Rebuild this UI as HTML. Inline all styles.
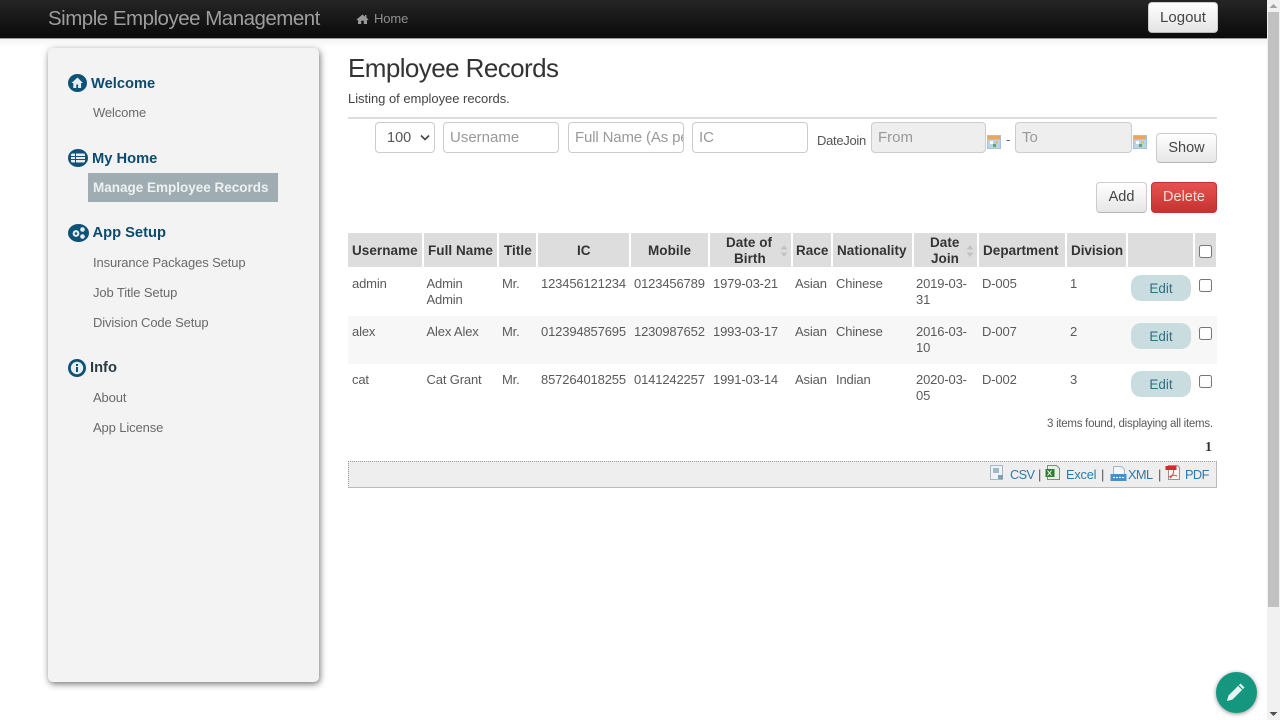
<!DOCTYPE html>
<html><head><meta charset="utf-8"><title>Employee Records</title>
<style>
html,body{margin:0;padding:0;width:1280px;height:720px;overflow:hidden;background:#fff}
body{position:relative;font-family:"Liberation Sans",sans-serif;font-size:13px;color:#555}
.a,.t,.h,.m{position:absolute}
.t,.h,.m{white-space:nowrap;line-height:16px}
.t{color:#5a5a5a;letter-spacing:-.15px}
.h{font-weight:bold;color:#333;text-align:center;font-size:13.5px;letter-spacing:.05px}
.m{color:#6a6a6a;font-size:13px;letter-spacing:-.12px}
.s{color:#0d4a6e;font-weight:bold;font-size:14.7px;line-height:18px;position:absolute;white-space:nowrap}
.th{position:absolute;top:233px;height:34px;background:#ddd}
.in{position:absolute;top:122px;height:29px;background:#fff;border:1px solid #ccc;border-radius:4px;color:#999;font-size:15px;line-height:30px;padding-left:6px;box-sizing:content-box;overflow:hidden;white-space:nowrap}
.cb{position:absolute;width:11px;height:11px;border:1px solid #767676;border-radius:2.5px;background:#fff}
.ed{position:absolute;left:1131px;width:60px;height:26px;border-radius:10px;background:#c9dde0;color:#2d6f85;text-align:center;line-height:27px;font-size:13.5px}
.btn{position:absolute;border:1px solid #ccc;border-bottom-color:#b5b5b5;border-radius:4px;background:linear-gradient(#fff,#e6e6e6);color:#444;text-align:center;font-size:14.5px;box-sizing:border-box}
.lk{position:absolute;color:#2a7ab0;font-size:12.8px;line-height:16px;top:466.5px;white-space:nowrap}
.sep{position:absolute;color:#555;font-size:13px;line-height:16px;top:466.5px}
.cal{position:absolute;top:135px;width:14px;height:14px}
svg{position:absolute;overflow:visible}
</style></head><body>

<div class="a" style="left:0;top:0;width:1267px;height:38px;background:linear-gradient(#252525,#0a0a0a);border-bottom:1px solid #999;box-sizing:content-box"></div>
<div class="a" style="left:0;top:39px;width:1267px;height:8px;background:linear-gradient(#f4f4f4,#fff)"></div>
<span class="a" style="left:48px;top:6px;font-size:20.5px;line-height:26px;color:#9d9d9d;white-space:nowrap;letter-spacing:-.5px">Simple Employee Management</span>
<svg style="left:356px;top:13px" width="13" height="12" viewBox="0 0 13 12"><path d="M6.5 1.5L.5 6.5l.7.8L2 6.700V11h3.200V7.800h2.600V11H11V6.700l.8.6.7-.8-2-1.700V2H9v1.600z" fill="#999"/></svg>
<span class="a" style="left:374px;top:11px;font-size:13px;line-height:16px;color:#8f8f8f;letter-spacing:-.1px">Home</span>
<div class="btn" style="left:1148px;top:2px;width:70px;height:31px;line-height:30px;font-size:15px;background:linear-gradient(#fff,#e4e4e4);color:#444">Logout</div>

<!-- scrollbar -->
<div class="a" style="left:1267px;top:0;width:13px;height:720px;background:#f1f1f1"></div>
<div class="a" style="left:1268px;top:12px;width:11px;height:595px;background:#c1c1c1"></div>
<svg style="left:1269px;top:3px" width="9" height="6"><path d="M4.500 1L8.500 5H.5z" fill="#a3a3a3"/></svg>
<svg style="left:1269px;top:711px" width="9" height="6"><path d="M.5 1h8L4.500 5z" fill="#505050"/></svg>

<!-- sidebar -->
<div class="a" style="left:48px;top:48px;width:271px;height:634px;background:#f3f3f3;border-radius:5px;box-shadow:1px 2px 7px rgba(0,0,0,.55)"></div>

<svg style="left:68px;top:74px" width="19" height="18" viewBox="0 0 19 18"><ellipse cx="9.500" cy="9" rx="9.500" ry="9" fill="#0f5278"/><path d="M9.500 3.500L3.500 9h1.800V14h3V10.500h1.800V14h3V9h1.800z" fill="#e6eef2"/></svg>
<span class="s" style="left:91px;top:75px">Welcome</span>
<span class="m" style="left:93px;top:105px">Welcome</span>

<svg style="left:68px;top:149px" width="20" height="18" viewBox="0 0 20 18"><ellipse cx="10" cy="9" rx="10" ry="9" fill="#0f5278"/><rect x="3" y="4.500" width="14" height="9" rx="1.500" fill="#e6eef2"/><path d="M3 7.500h14M3 10.500h14M7.500 4.500v9" stroke="#0f5278" stroke-width="1"/></svg>
<span class="s" style="left:92px;top:150px">My Home</span>
<div class="a" style="left:88px;top:173px;width:190px;height:29px;background:#9fadb3"></div>
<span class="a" style="left:93px;top:180px;font-weight:bold;font-size:13.5px;line-height:16px;color:#eef1f2;white-space:nowrap;letter-spacing:0">Manage Employee Records</span>

<svg style="left:68px;top:224px" width="21" height="18" viewBox="0 0 21 18"><ellipse cx="10.500" cy="9" rx="10.500" ry="9" fill="#0f5278"/><circle cx="8" cy="9.500" r="3.400" fill="#e6eef2"/><circle cx="8" cy="9.500" r="1.300" fill="#0f5278"/><circle cx="14.500" cy="5.500" r="2.300" fill="#e6eef2"/><circle cx="14.500" cy="12.500" r="2.300" fill="#e6eef2"/></svg>
<span class="s" style="left:92.500px;top:224px">App Setup</span>
<span class="m" style="left:93px;top:255px">Insurance Packages Setup</span>
<span class="m" style="left:93px;top:285px">Job Title Setup</span>
<span class="m" style="left:93px;top:315px">Division Code Setup</span>

<svg style="left:68px;top:359px" width="18" height="18" viewBox="0 0 18 18"><circle cx="9" cy="9" r="9" fill="#0f5278"/><circle cx="9" cy="9" r="6.200" fill="#e6eef2"/><rect x="8" y="8" width="2" height="5" fill="#0f5278"/><rect x="8" y="5" width="2" height="2" fill="#0f5278"/></svg>
<span class="s" style="left:90px;top:359px;color:#2c3a42">Info</span>
<span class="m" style="left:93px;top:390px">About</span>
<span class="m" style="left:93px;top:420px">App License</span>

<!-- main heading -->
<span class="a" style="left:348px;top:52px;font-size:26px;line-height:32px;color:#333;white-space:nowrap;letter-spacing:-.58px">Employee Records</span>
<span class="t" style="left:348px;top:91px;color:#444;letter-spacing:-.03px">Listing of employee records.</span>
<div class="a" style="left:348px;top:117px;width:869px;height:2px;background:#ddd"></div>

<!-- filter -->
<div class="in" style="left:375px;color:#555;padding-left:11px;width:47px;font-size:14.5px">100</div>
<svg style="left:420px;top:134px" width="10" height="7"><path d="M1 1.500l4 4 4-4" fill="none" stroke="#444" stroke-width="1.600"/></svg>
<div class="in" style="left:443px;width:108px">Username</div>
<div class="in" style="left:568px;width:108px;letter-spacing:-.15px">Full Name (As pe</div>
<div class="in" style="left:692px;width:108px">IC</div>
<span class="t" style="left:817px;top:133px;color:#555;letter-spacing:-.3px">DateJoin</span>
<div class="in" style="left:871px;width:107px;background:#eee">From</div>
<svg class="cal" style="left:987px" viewBox="0 0 14 14"><rect x=".5" y=".5" width="13" height="13" fill="#b9d3e8" stroke="#a5c2d8"/><rect x="1" y="1" width="12" height="3.500" fill="#eda45c"/><rect x="3" y="6" width="3" height="3" fill="#fff"/><rect x="8" y="6" width="3" height="3" fill="#e8c45a"/><rect x="6" y="9" width="3" height="3" fill="#5fa86a"/></svg>
<span class="t" style="left:1006px;top:132px">-</span>
<div class="in" style="left:1015px;width:109px;background:#eee">To</div>
<svg class="cal" style="left:1133px" viewBox="0 0 14 14"><rect x=".5" y=".5" width="13" height="13" fill="#b9d3e8" stroke="#a5c2d8"/><rect x="1" y="1" width="12" height="3.500" fill="#eda45c"/><rect x="3" y="6" width="3" height="3" fill="#fff"/><rect x="8" y="6" width="3" height="3" fill="#e8c45a"/><rect x="6" y="9" width="3" height="3" fill="#5fa86a"/></svg>
<div class="btn" style="left:1156px;top:133px;width:61px;height:30px;line-height:28px">Show</div>
<div class="btn" style="left:1096px;top:182px;width:51px;height:31px;line-height:29px">Add</div>
<div class="btn" style="left:1151px;top:182px;width:66px;height:31px;line-height:29px;background:linear-gradient(#e6524f,#c53330);border-color:#c53330;color:#f6dcdc">Delete</div>

<!-- table header -->
<div class="th" style="left:348px;width:74px"></div>
<div class="th" style="left:424px;width:73px"></div>
<div class="th" style="left:499px;width:37px"></div>
<div class="th" style="left:538px;width:91px"></div>
<div class="th" style="left:631px;width:77px"></div>
<div class="th" style="left:710px;width:81px"></div>
<div class="th" style="left:793px;width:38px"></div>
<div class="th" style="left:833px;width:79px"></div>
<div class="th" style="left:914px;width:63px"></div>
<div class="th" style="left:979px;width:86px"></div>
<div class="th" style="left:1067px;width:59px"></div>
<div class="th" style="left:1128px;width:65px"></div>
<div class="th" style="left:1195px;width:21px"></div>

<span class="h" style="left:352px;top:242.500px">Username</span>
<span class="h" style="left:428px;top:242.500px">Full Name</span>
<span class="h" style="left:504px;top:242.500px">Title</span>
<span class="h" style="left:577px;top:242.500px">IC</span>
<span class="h" style="left:648px;top:242.500px">Mobile</span>
<span class="h" style="left:726px;top:234.500px">Date of</span>
<span class="h" style="left:734px;top:250.500px">Birth</span>
<span class="h" style="left:796px;top:242.500px">Race</span>
<span class="h" style="left:837px;top:242.500px">Nationality</span>
<span class="h" style="left:930px;top:234.500px">Date</span>
<span class="h" style="left:931px;top:250.500px">Join</span>
<span class="h" style="left:983px;top:242.500px">Department</span>
<span class="h" style="left:1071px;top:242.500px;letter-spacing:-.05px">Division</span>
<svg style="left:780px;top:245px" width="8" height="12"><path d="M4 0l3.500 4.500h-7zM4 12L.5 7.500h7z" fill="#c2c2c2"/></svg>
<svg style="left:966px;top:245px" width="8" height="12"><path d="M4 0l3.500 4.500h-7zM4 12L.5 7.500h7z" fill="#c2c2c2"/></svg>
<div class="cb" style="left:1199px;top:245px"></div>

<!-- rows -->
<div class="a" style="left:348px;top:316px;width:869px;height:48px;background:#f7f7f7"></div>

<span class="t" style="left:352px;top:276px">admin</span>
<span class="t" style="left:426.500px;top:276px">Admin</span>
<span class="t" style="left:426.500px;top:292px">Admin</span>
<span class="t" style="left:502px;top:276px">Mr.</span>
<span class="t" style="left:541px;top:276px">123456121234</span>
<span class="t" style="left:634px;top:276px">0123456789</span>
<span class="t" style="left:713px;top:276px">1979-03-21</span>
<span class="t" style="left:795px;top:276px">Asian</span>
<span class="t" style="left:836px;top:276px">Chinese</span>
<span class="t" style="left:916px;top:276px">2019-03-</span>
<span class="t" style="left:916px;top:292px">31</span>
<span class="t" style="left:982px;top:276px">D-005</span>
<span class="t" style="left:1070px;top:276px">1</span>
<div class="ed" style="top:275px">Edit</div>
<div class="cb" style="left:1199px;top:279px"></div>

<span class="t" style="left:352px;top:324px">alex</span>
<span class="t" style="left:426.500px;top:324px">Alex Alex</span>
<span class="t" style="left:502px;top:324px">Mr.</span>
<span class="t" style="left:541px;top:324px">012394857695</span>
<span class="t" style="left:634px;top:324px">1230987652</span>
<span class="t" style="left:713px;top:324px">1993-03-17</span>
<span class="t" style="left:795px;top:324px">Asian</span>
<span class="t" style="left:836px;top:324px">Chinese</span>
<span class="t" style="left:916px;top:324px">2016-03-</span>
<span class="t" style="left:916px;top:340px">10</span>
<span class="t" style="left:982px;top:324px">D-007</span>
<span class="t" style="left:1070px;top:324px">2</span>
<div class="ed" style="top:323px">Edit</div>
<div class="cb" style="left:1199px;top:327px"></div>

<span class="t" style="left:352px;top:372px">cat</span>
<span class="t" style="left:426.500px;top:372px">Cat Grant</span>
<span class="t" style="left:502px;top:372px">Mr.</span>
<span class="t" style="left:541px;top:372px">857264018255</span>
<span class="t" style="left:634px;top:372px">0141242257</span>
<span class="t" style="left:713px;top:372px">1991-03-14</span>
<span class="t" style="left:795px;top:372px">Asian</span>
<span class="t" style="left:836px;top:372px">Indian</span>
<span class="t" style="left:916px;top:372px">2020-03-</span>
<span class="t" style="left:916px;top:388px">05</span>
<span class="t" style="left:982px;top:372px">D-002</span>
<span class="t" style="left:1070px;top:372px">3</span>
<div class="ed" style="top:371px">Edit</div>
<div class="cb" style="left:1199px;top:375px"></div>

<!-- footer -->
<span class="t" style="left:1047px;top:415.500px;font-size:11.500px;letter-spacing:-.26px">3 items found, displaying all items.</span>
<span class="a" style="left:1205px;top:440px;font-family:'Liberation Serif',serif;font-weight:bold;font-size:14px;line-height:16px;color:#333">1</span>
<div class="a" style="left:348px;top:461px;width:869px;height:27px;background:#eee;border:1px dotted #999;border-right:1px solid #bbb;border-bottom:1px solid #bbb;box-sizing:border-box"></div>

<svg style="left:990px;top:465px" width="15" height="16"><rect x=".5" y=".5" width="12" height="14" fill="#eef3f6" stroke="#a3bac6"/><rect x="3" y="3" width="6" height="5" fill="#9dbacb"/><rect x="8" y="10" width="5" height="4" fill="#7ba1b3"/></svg>
<span class="lk" style="left:1010px;letter-spacing:-.65px">CSV</span><span class="sep" style="left:1038px">|</span>
<svg style="left:1045px;top:465px" width="17" height="16"><path d="M2.500.5h9l3 3v11h-12z" fill="#e8efe4" stroke="#7c8f72"/><rect x=".5" y="4" width="9" height="8" fill="#2f7d32"/><path d="M2.500 5.500l4 5M6.500 5.500l-4 5" stroke="#fff"/></svg>
<span class="lk" style="left:1066px;letter-spacing:-.2px">Excel</span><span class="sep" style="left:1101px">|</span>
<svg style="left:1110px;top:466px" width="17" height="17"><path d="M3.500.5h8l3 3v8h-11z" fill="#f4f6f8" stroke="#a9b5be"/><rect x=".5" y="8" width="16" height="7" fill="#4c8fc4"/><path d="M3 11.500h11" stroke="#fff" stroke-dasharray="2 1"/></svg>
<span class="lk" style="left:1128px;letter-spacing:-.6px">XML</span><span class="sep" style="left:1158px">|</span>
<svg style="left:1165px;top:465px" width="17" height="16"><path d="M3.500.5h9l2 2v12h-11z" fill="#f8f4f4" stroke="#9a8f8f"/><rect x=".5" y="1" width="11" height="4" fill="#d42a2a"/><path d="M5 13c2-1 4-5 3.500-8M4 12c3-2 6-2 8-1" fill="none" stroke="#d84a4a"/></svg>
<span class="lk" style="left:1185px;letter-spacing:-.6px">PDF</span>

<!-- FAB -->
<div class="a" style="left:1216px;top:672px;width:41px;height:41px;border-radius:50%;background:#14967f;box-shadow:0 1px 4px rgba(0,0,0,.45)"></div>
<svg style="left:1225px;top:681px" width="22" height="22" viewBox="0 0 22 22"><path d="M15.500 2.500l4 4L7.500 18.500 2 20l1.500-5.500z" fill="#e8f6f3"/><path d="M13.500 4.500l4 4" stroke="#14967f" stroke-width="1.200"/></svg>
</body></html>
